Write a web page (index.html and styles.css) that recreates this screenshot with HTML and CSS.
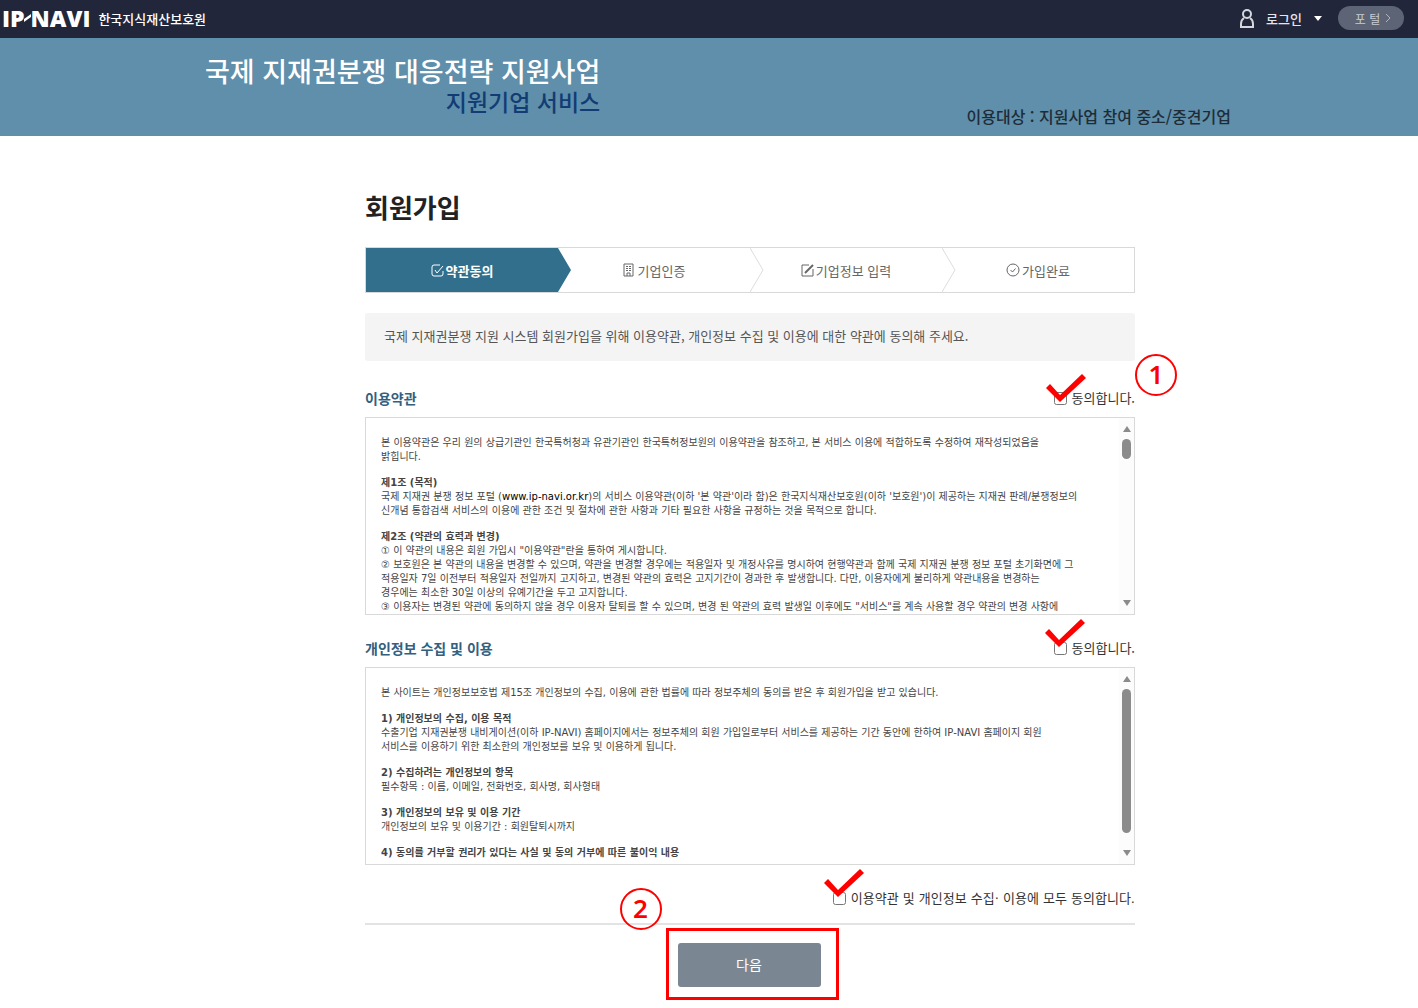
FILE: index.html
```html
<!DOCTYPE html>
<html lang="ko">
<head>
    <meta charset="UTF-8">
    <meta name="viewport" content="width=device-width, initial-scale=1.0">
    <title>IP-NAVI 회원가입</title>
    <link rel="stylesheet" href="styles.css">
</head>
<body>

<header class="topbar">
    <a class="brand" href="#">
        <span class="logo">IP<svg class="logo-dash" width="8" height="8" viewBox="0 0 8 8"><path d="M0 5L7 0V3L0 8Z"/></svg>NAVI</span>
        <span class="org">한국지식재산보호원</span>
    </a>
    <nav class="top-menu">
        <button class="login" type="button">
            <svg width="14" height="19" viewBox="0 0 14 19"><circle cx="7" cy="5" r="4"/><path d="M4 9Q1 11 1 15V18H13V15Q13 11 10 9"/></svg>
            <span>로그인</span>
            <svg class="caret" width="8" height="5" viewBox="0 0 8 5"><path d="M0 0H8L4 5Z"/></svg>
        </button>
        <a class="portal" href="#">포 털
            <svg width="6" height="10" viewBox="0 0 6 10"><path d="M1 1L5 5L1 9"/></svg>
        </a>
    </nav>
</header>

<div class="banner">
    <div class="banner-inner">
        <div class="banner-title">
            <strong>국제 지재권분쟁 대응전략 지원사업</strong>
            <span>지원기업 서비스</span>
        </div>
        <p class="banner-target">이용대상 : 지원사업 참여 중소/중견기업</p>
    </div>
</div>

<main class="page">
    <form class="join">
        <h1>회원가입</h1>

        <ol class="steps">
            <li class="active">
                <svg class="icon" width="13" height="13" viewBox="0 0 13 13"><path d="M9 1H3Q1 1 1 3V10Q1 12 3 12H10Q12 12 12 10V7M4 6L6 9L12 2"/></svg>
                약관동의
                <svg class="arrow" width="14" height="44" viewBox="0 0 14 44"><path d="M0 0L13 22L0 44"/></svg>
            </li>
            <li>
                <svg class="icon" width="11" height="14" viewBox="0 0 11 14"><path d="M1 1H10V13H1ZM4 13V10H7V13M3 3.5H5M6 3.5H8M3 5.5H5M6 5.5H8M3 7.5H5M6 7.5H8"/></svg>
                <span class="gap">기업인증</span>
                <svg class="arrow" width="14" height="44" viewBox="0 0 14 44"><path d="M0 0L13 22L0 44"/></svg>
            </li>
            <li>
                <svg class="icon" width="13" height="13" viewBox="0 0 13 13"><path d="M8 1H1V12H12V5"/><path class="pen" d="M4 9L12 1"/></svg>
                기업정보 입력
                <svg class="arrow" width="14" height="44" viewBox="0 0 14 44"><path d="M0 0L13 22L0 44"/></svg>
            </li>
            <li>
                <svg class="icon" width="14" height="14" viewBox="0 0 14 14"><circle cx="7" cy="7" r="6"/><path d="M4.500 7L6.500 9L9.500 5.500"/></svg>
                가입완료
            </li>
        </ol>

        <p class="notice">국제 지재권분쟁 지원 시스템 회원가입을 위해 이용약관, 개인정보 수집 및 이용에 대한 약관에 동의해 주세요.</p>

        <section>
            <div class="section-head">
                <h2>이용약관</h2>
                <label class="agree"><input type="checkbox"> 동의합니다.
                    <svg class="mark" width="40" height="29" viewBox="0 0 40 29"><path d="M4 10L0 14L14 28L40 4L36 0L14 21Z"/></svg>
                </label>
                <span class="number number-one">1</span>
            </div>
            <div class="terms">
                <div class="terms-text">
                    <p>본 이용약관은 우리 원의 상급기관인 한국특허청과 유관기관인 한국특허정보원의 이용약관을 참조하고, 본 서비스 이용에 적합하도록 수정하여 재작성되었음을<br>밝힙니다.</p>
                    <p><b>제1조 (목적)</b><br>
                    국제 지재권 분쟁 정보 포털 (<a href="#">www.ip-navi.or.kr</a>)의 서비스 이용약관(이하 '본 약관'이라 함)은 한국지식재산보호원(이하 '보호원')이 제공하는 지재권 판례/분쟁정보의<br>
                    신개념 통합검색 서비스의 이용에 관한 조건 및 절차에 관한 사항과 기타 필요한 사항을 규정하는 것을 목적으로 합니다.</p>
                    <p><b>제2조 (약관의 효력과 변경)</b><br>
                    ① 이 약관의 내용은 회원 가입시 "이용약관"란을 통하여 게시합니다.<br>
                    ② 보호원은 본 약관의 내용을 변경할 수 있으며, 약관을 변경할 경우에는 적용일자 및 개정사유를 명시하여 현행약관과 함께 국제 지재권 분쟁 정보 포털 초기화면에 그<br>
                    적용일자 7일 이전부터 적용일자 전일까지 고지하고, 변경된 약관의 효력은 고지기간이 경과한 후 발생합니다. 다만, 이용자에게 불리하게 약관내용을 변경하는<br>
                    경우에는 최소한 30일 이상의 유예기간을 두고 고지합니다.<br>
                    ③ 이용자는 변경된 약관에 동의하지 않을 경우 이용자 탈퇴를 할 수 있으며, 변경 된 약관의 효력 발생일 이후에도 "서비스"를 계속 사용할 경우 약관의 변경 사항에</p>
                </div>
                <div class="scrollbar">
                    <svg width="10" height="8" viewBox="0 0 10 8"><path d="M1 7L5 1L9 7Z"/></svg>
                    <div class="track"><div class="thumb thumb-short"></div></div>
                    <svg width="10" height="8" viewBox="0 0 10 8"><path d="M1 1L5 7L9 1Z"/></svg>
                </div>
            </div>
        </section>

        <section>
            <div class="section-head">
                <h2>개인정보 수집 및 이용</h2>
                <label class="agree"><input type="checkbox"> 동의합니다.
                    <svg class="mark mark-high" width="40" height="29" viewBox="0 0 40 29"><path d="M4 10L0 14L14 28L40 4L36 0L14 21Z"/></svg>
                </label>
            </div>
            <div class="terms">
                <div class="terms-text">
                    <p>본 사이트는 개인정보보호법 제15조 개인정보의 수집, 이용에 관한 법률에 따라 정보주체의 동의를 받은 후 회원가입을 받고 있습니다.</p>
                    <p><b>1) 개인정보의 수집, 이용 목적</b><br>
                    수출기업 지재권분쟁 내비게이션(이하 IP-NAVI) 홈페이지에서는 정보주체의 회원 가입일로부터 서비스를 제공하는 기간 동안에 한하여 IP-NAVI 홈페이지 회원<br>
                    서비스를 이용하기 위한 최소한의 개인정보를 보유 및 이용하게 됩니다.</p>
                    <p><b>2) 수집하려는 개인정보의 항목</b><br>
                    필수항목 : 이름, 이메일, 전화번호, 회사명, 회사형태</p>
                    <p><b>3) 개인정보의 보유 및 이용 기간</b><br>
                    개인정보의 보유 및 이용기간 : 회원탈퇴시까지</p>
                    <p><b>4) 동의를 거부할 권리가 있다는 사실 및 동의 거부에 따른 불이익 내용</b></p>
                </div>
                <div class="scrollbar">
                    <svg width="10" height="8" viewBox="0 0 10 8"><path d="M1 7L5 1L9 7Z"/></svg>
                    <div class="track"><div class="thumb"></div></div>
                    <svg width="10" height="8" viewBox="0 0 10 8"><path d="M1 1L5 7L9 1Z"/></svg>
                </div>
            </div>
        </section>

        <div class="agree-all">
            <label class="agree"><input type="checkbox"> 이용약관 및 개인정보 수집· 이용에 모두 동의합니다.
                <svg class="mark mark-high" width="40" height="29" viewBox="0 0 40 29"><path d="M4 10L0 14L14 28L40 4L36 0L14 21Z"/></svg>
            </label>
        </div>

        <div class="actions">
            <div class="next-frame">
                <button class="next" type="button">다음</button>
                <span class="number number-two">2</span>
            </div>
        </div>
    </form>
</main>

</body>
</html>
```
FILE: styles.css
```css
* {
    box-sizing: border-box;
}

body {
    margin: 0;
    font-family: "Noto Sans CJK KR", sans-serif;
    font-size: 13px;
    color: #333;
    background-color: #fff;
}

h1, h2, p, ol {
    margin: 0;
    padding: 0;
}

a {
    color: inherit;
    text-decoration: none;
}

button {
    font-family: inherit;
    border: none;
    cursor: pointer;
}

/* top bar */
.topbar {
    display: flex;
    justify-content: space-between;
    align-items: center;
    height: 38px;
    padding: 0 14px 2px 2px;
    color: #fff;
    background-color: #22263a;
}

.brand {
    display: flex;
    align-items: center;
    gap: 8px;
}

.logo {
    display: flex;
    align-items: center;
    font-family: "Open Sans", sans-serif;
    font-size: 23px;
    font-weight: 800;
    line-height: 36px;
}

.logo-dash {
    margin: 0 -1px;
    fill: #fff;
}

.org {
    font-size: 13px;
    font-weight: 500;
}

.top-menu {
    display: flex;
    align-items: center;
    gap: 16px;
}

.login {
    display: flex;
    align-items: center;
    gap: 12px;
    padding: 0;
    font-size: 13px;
    font-weight: 500;
    color: #e4e5ea;
    background: none;
}

.login svg {
    fill: none;
    stroke: #d5d7de;
    stroke-width: 2;
}

.login .caret {
    fill: #fff;
    stroke: none;
}

.portal {
    display: flex;
    align-items: center;
    justify-content: center;
    gap: 5px;
    width: 66px;
    height: 24px;
    padding-left: 4px;
    font-size: 12px;
    color: #c9ccd4;
    background-color: #5c6476;
    border-radius: 12px;
}

.portal svg {
    fill: none;
    stroke: #b0b5c0;
}

/* banner */
.banner {
    padding: 0 20px 0 38px;
    background-color: #5f8faa;
}

.banner-inner {
    display: flex;
    justify-content: space-between;
    align-items: flex-end;
    max-width: 1026px;
    height: 98px;
    margin: 0 auto;
}

.banner-title {
    display: flex;
    flex-direction: column;
    align-items: flex-end;
    padding-bottom: 20px;
}

.banner-title strong {
    font-size: 27px;
    font-weight: 500;
    line-height: 30px;
    color: #fff;
}

.banner-title span {
    font-size: 23px;
    font-weight: 500;
    line-height: 30px;
    color: #113c74;
}

.banner-target {
    padding-bottom: 8px;
    font-size: 16px;
    font-weight: 500;
    color: #1e2c38;
}

/* join form */
.page {
    padding: 51px 0 8px 82px;
}

.join {
    max-width: 770px;
    margin: 0 auto;
}

h1 {
    font-size: 26px;
    line-height: 40px;
    color: #222;
}

.steps {
    display: flex;
    margin-top: 20px;
    border: 1px solid #d9d9d9;
    list-style: none;
}

.steps li {
    position: relative;
    display: flex;
    flex: 1;
    align-items: center;
    justify-content: center;
    gap: 2px;
    height: 44px;
    color: #666;
}

.steps .active {
    font-weight: 700;
    color: #fff;
    background-color: #316f8d;
}

.steps .gap {
    padding-left: 2px;
}

.icon {
    fill: none;
    stroke: currentColor;
}

.icon .pen {
    stroke-width: 2;
}

.arrow {
    position: absolute;
    top: 0;
    left: 100%;
    z-index: 1;
    fill: #fff;
    stroke: #ddd;
}

.active .arrow {
    fill: #316f8d;
    stroke: none;
}

.notice {
    margin-top: 20px;
    padding: 0 19px 2px;
    line-height: 46px;
    color: #555;
    background-color: #f4f4f4;
    border-radius: 3px;
}

.section-head {
    position: relative;
    display: flex;
    justify-content: space-between;
    align-items: center;
    height: 33px;
    padding-bottom: 6px;
}

.notice + section {
    padding-top: 23px;
}

section + section {
    padding-top: 19px;
}

h2 {
    font-size: 14px;
    font-weight: 700;
    color: #32607f;
}

.agree {
    position: relative;
    display: flex;
    align-items: center;
    gap: 5px;
    color: #333;
}

.agree input {
    width: 13px;
    height: 13px;
    margin: 2px 0 0;
}

.terms {
    display: flex;
    height: 198px;
    border: 1px solid #d9d9d9;
    overflow: hidden;
}

.terms-text {
    flex: 1;
    min-width: 0;
    padding: 18px 0 0 15px;
    overflow: hidden;
    font-family: "DejaVu Sans", "Noto Sans CJK KR", sans-serif;
    font-size: 10px;
    line-height: 14px;
    color: #444;
    white-space: nowrap;
}

.terms-text p {
    margin-bottom: 12px;
}

.terms-text a {
    color: #000;
}

.scrollbar {
    display: flex;
    flex-direction: column;
    align-items: center;
    gap: 6px;
    width: 15px;
    padding: 7px 0;
    background-color: #fcfcfc;
}

.scrollbar svg {
    fill: #8b8b8b;
}

.track {
    flex: 1;
    width: 9px;
}

.thumb {
    height: 144px;
    background-color: #8b8b8b;
    border-radius: 5px;
}

.thumb-short {
    height: 20px;
}

.agree-all {
    display: flex;
    justify-content: flex-end;
    align-items: center;
    height: 60px;
    padding-top: 6px;
    border-bottom: 2px solid #e3e3e3;
    font-family: "DejaVu Sans", "Noto Sans CJK KR", sans-serif;
}

.actions {
    display: flex;
    justify-content: center;
    padding: 3px 0 0 4px;
}

.next-frame {
    position: relative;
    padding: 12px 15px 10px 9px;
    border: 3px solid #f00;
}

.next {
    display: block;
    width: 143px;
    height: 44px;
    padding-bottom: 4px;
    font-size: 14px;
    color: #fff;
    background-color: #7a8793;
    border-radius: 3px;
}

/* red guide marks */
.mark {
    position: absolute;
    top: -14px;
    left: -8px;
    fill: #f00;
}

.mark-high {
    top: -19px;
    left: -9px;
}

.number {
    position: absolute;
    width: 42px;
    height: 42px;
    border: 2px solid #f00;
    border-radius: 50%;
    font-family: "Noto Sans", sans-serif;
    font-size: 26px;
    font-weight: 600;
    line-height: 36px;
    text-align: center;
    color: #f00;
}

.number-one {
    top: -30px;
    left: 100%;
}

.number-two {
    top: -43px;
    left: -49px;
}
```
